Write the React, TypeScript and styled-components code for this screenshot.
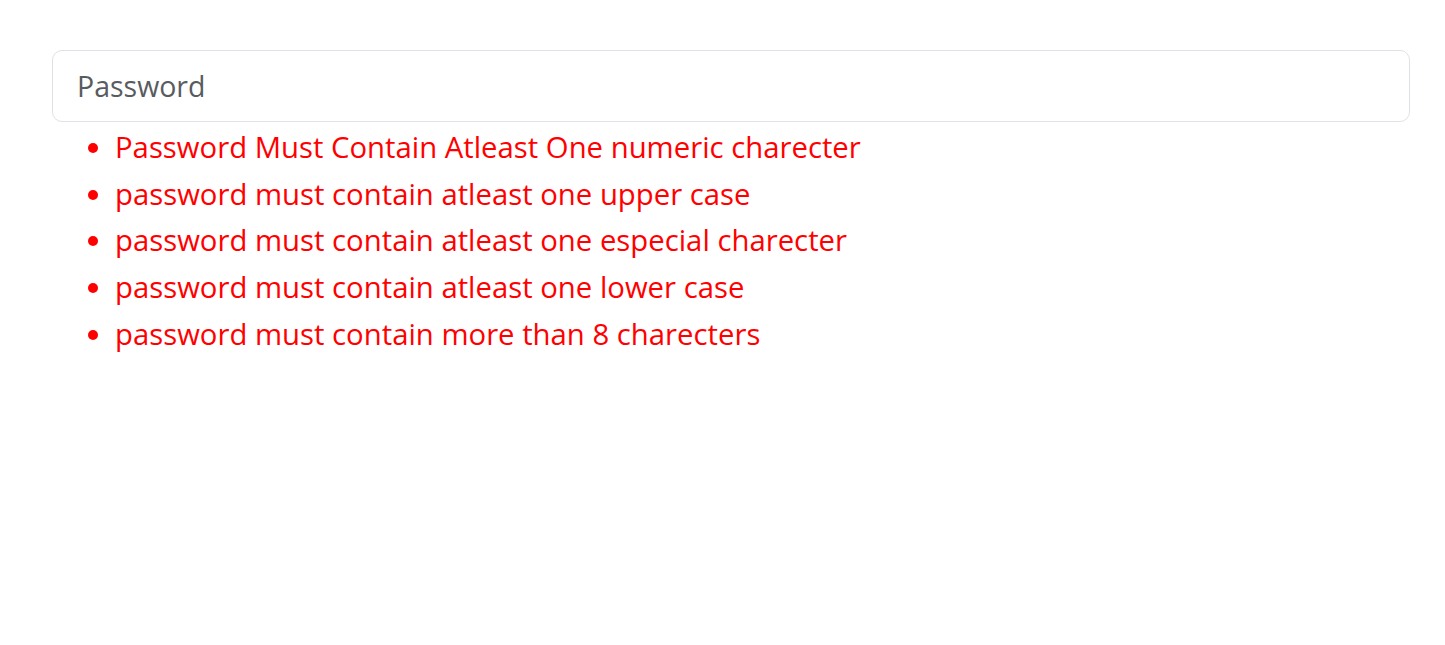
import * as React from "react";
import styled, { createGlobalStyle } from "styled-components";

const GlobalStyle = createGlobalStyle`
  html, body {
    margin: 0;
    padding: 0;
    background: #ffffff;
  }
  body {
    font-family: "Open Sans", "Noto Sans", sans-serif;
  }
`;

// Page wrapper
const Page = styled.div`
  padding: 50px 35px 0 52px;
`;

// Password field
const PasswordInput = styled.input`
  display: block;
  box-sizing: border-box;
  width: 100%;
  height: 72px;
  padding: 0 24px;
  border: 1px solid #dee2e6;
  border-radius: 10px;
  background: #fff;
  font-family: "Open Sans", "Noto Sans", sans-serif;
  font-size: 28.5px;
  color: #212529;
  outline: none;

  &::placeholder {
    color: #595c5f;
    opacity: 1;
  }
`;

// Validation messages
const ErrorList = styled.ul`
  margin: 2px 0 0;
  padding-left: 63px;
  list-style: disc;
`;

const ErrorItem = styled.li`
  color: #ff0000;
  font-size: 29.3px;
  line-height: 46.7px;
`;

const errors = [
  "Password Must Contain Atleast One numeric charecter",
  "password must contain atleast one upper case",
  "password must contain atleast one especial charecter",
  "password must contain atleast one lower case",
  "password must contain more than 8 charecters",
];

export default function App() {
  return (
    <>
      <GlobalStyle />
      <Page>
        <PasswordInput type="password" placeholder="Password" />
        <ErrorList>
          {errors.map((e) => (
            <ErrorItem key={e}>{e}</ErrorItem>
          ))}
        </ErrorList>
      </Page>
    </>
  );
}
